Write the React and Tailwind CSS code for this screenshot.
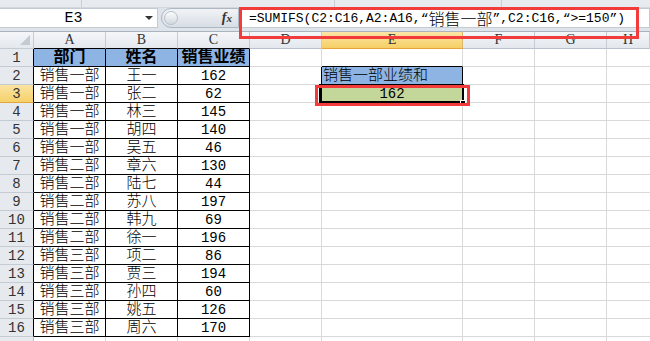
import clsx from "clsx";

const rows = [
  ["部门", "姓名", "销售业绩"],
  ["销售一部", "王一", "162"],
  ["销售一部", "张二", "62"],
  ["销售一部", "林三", "145"],
  ["销售一部", "胡四", "140"],
  ["销售一部", "吴五", "46"],
  ["销售二部", "章六", "130"],
  ["销售二部", "陆七", "44"],
  ["销售二部", "苏八", "197"],
  ["销售二部", "韩九", "69"],
  ["销售二部", "徐一", "196"],
  ["销售三部", "项二", "86"],
  ["销售三部", "贾三", "194"],
  ["销售三部", "孙四", "60"],
  ["销售三部", "姚五", "126"],
  ["销售三部", "周六", "170"],
  ["", "", ""],
];

const cols = ["A", "B", "C", "D", "E", "F", "G", "H"];
const grid = "grid grid-cols-[34px_72px_72px_72px_72px_141px_72px_72px_43px]";

function ColHeader({ label, i }) {
  const active = label === "E";
  return (
    <div
      className={clsx(
        "h-[17px] flex items-center justify-center border-r border-b text-[14px] text-[#333] font-['Liberation_Serif',serif] leading-none",
        active
          ? "bg-gradient-to-b from-[#fbe6a6] to-[#f6cf63] border-b-[#e4a53c] border-r-[#d9b66a]"
          : "bg-gradient-to-b from-[#f4f6f9] to-[#e3e8ee] border-r-[#c4cbd3]",
        !active && (i < 3 ? "border-b-black" : "border-b-[#b9c2cc]")
      )}
    >
      {label}
    </div>
  );
}

function Row({ r, cells }) {
  const inTable = r <= 16;
  const isHead = r === 1;
  return (
    <div className={grid}>
      <div
        className={clsx(
          "h-[18px] flex items-center justify-center border-r border-b text-[14px] leading-none text-[#333]",
          r === 3
            ? "bg-gradient-to-b from-[#fbe3a0] to-[#f6d16a] border-b-[#e4a53c]"
            : "bg-[#e6eaef] border-b-[#c4cbd3]",
          inTable ? "border-r-black" : "border-r-[#b9c2cc]"
        )}
      >
        {inTable ? r : ""}
      </div>
      {cols.slice(0, 3).map((c, i) => (
        <div
          key={c}
          className={clsx(
            "h-[18px] flex items-center justify-center border-r border-b leading-none pt-[1px] text-black",
            inTable ? "border-black" : "border-[#d9d9d9]",
            isHead ? "bg-[#8db4e2] font-bold text-[16px]" : i === 2 ? "text-[14px]" : "text-[15px] font-light"
          )}
        >
          {cells[i]}
        </div>
      ))}
      <div
        className={clsx(
          "h-[18px] border-r border-b border-b-[#d9d9d9]",
          r === 2 || r === 3 ? "border-r-black" : "border-r-[#d9d9d9]"
        )}
      />
      {r === 2 ? (
        <div className="h-[18px] flex items-center border-r border-b border-black bg-[#8db4e2] text-[15px] font-light leading-none pl-[1px] pt-[1px]">
          销售一部业绩和
        </div>
      ) : r === 3 ? (
        <div className="relative h-[18px] flex items-center justify-center border-r border-b border-black bg-[#c4d79b] text-[14px] leading-none pt-[1px]">
          162
          <div className="absolute -left-[3px] -right-[2px] -top-[1px] -bottom-[1px] border-2 border-black" />
          <div className="absolute -right-[4px] -bottom-[4px] w-[6px] h-[6px] bg-black border border-white" />
        </div>
      ) : (
        <div
          className={clsx(
            "h-[18px] border-r border-b border-r-[#d9d9d9]",
            r === 1 ? "border-b-black" : "border-b-[#d9d9d9]"
          )}
        />
      )}
      <div className="h-[18px] border-r border-b border-[#d9d9d9]" />
      <div className="h-[18px] border-r border-b border-[#d9d9d9]" />
      <div className="h-[18px] border-b border-[#d9d9d9]" />
    </div>
  );
}

export default function App() {
  return (
    <div className="relative w-[650px] h-[341px] overflow-hidden bg-white font-['Liberation_Mono','Noto_Sans_CJK_SC',monospace] text-black">
      {/* ribbon bottom edge */}
      <div className="h-[8px] flex bg-[#e7ebf0] border-b border-[#d2d8df]">
        <div className="w-[82px] border-r border-[#c7ced6]" />
        <div className="w-[253px] border-r border-[#c7ced6]" />
        <div className="w-[167px] border-r border-[#c7ced6]" />
        <div className="flex-1" />
      </div>

      {/* formula bar */}
      <div className="h-[24px] flex bg-[#dfe4ea] border-b border-[#aab4bf]">
        <div className="w-[158px] h-[20px] flex items-center bg-white border border-[#c2cad3] border-l-0">
          <span className="flex-1 text-center text-[15px] leading-none pl-[2px]">E3</span>
          <span className="w-0 h-0 mr-[4px] border-l-[4px] border-r-[4px] border-t-[4px] border-l-transparent border-r-transparent border-t-[#333]" />
        </div>
        <div className="ml-[3px] w-[78px] h-[20px] flex items-center rounded-l-full bg-gradient-to-b from-[#f1f3f6] to-[#d8dee5] border border-[#aeb8c3]">
          <span className="ml-[2px] w-[14px] h-[14px] rounded-full bg-gradient-to-b from-[#fbfcfd] to-[#d3d9e0] border border-[#b7c0ca]" />
          <span className="ml-auto mr-[6px] italic font-bold text-[14px] leading-none text-[#333] font-['Liberation_Serif',serif]">
            f<span className="text-[11px]">x</span>
          </span>
        </div>
        <div className="flex-1 h-[20px] flex items-center bg-white border border-[#c2cad3] pl-[9px] text-[13px] leading-none whitespace-nowrap">
          =SUMIFS(C2:C16,A2:A16,“<span className="text-[16px] font-light font-['Noto_Sans_CJK_SC',sans-serif]">销售一部</span>”,C2:C16,“&gt;=150”)
        </div>
      </div>

      {/* column headers */}
      <div className={grid}>
        <div className="h-[17px] relative bg-gradient-to-b from-[#f4f6f9] to-[#e3e8ee] border-r border-b border-[#c4cbd3]">
          <svg className="absolute right-[3px] bottom-[3px]" width="10" height="10" viewBox="0 0 10 10">
            <path d="M10 0 L10 10 L0 10 Z" fill="#c3cad2" />
          </svg>
        </div>
        {cols.map((c, i) => (
          <ColHeader key={c} label={c} i={i} />
        ))}
      </div>

      {rows.map((cells, idx) => (
        <Row key={idx} r={idx + 1} cells={cells} />
      ))}

      {/* annotation boxes */}
      <div className="absolute left-[239px] top-[7px] w-[400px] h-[32px] border-[3px] border-[#f23c3c]" />
      <div className="absolute left-[315px] top-[85px] w-[155px] h-[21px] border-[3px] border-[#f23c3c]" />
    </div>
  );
}
